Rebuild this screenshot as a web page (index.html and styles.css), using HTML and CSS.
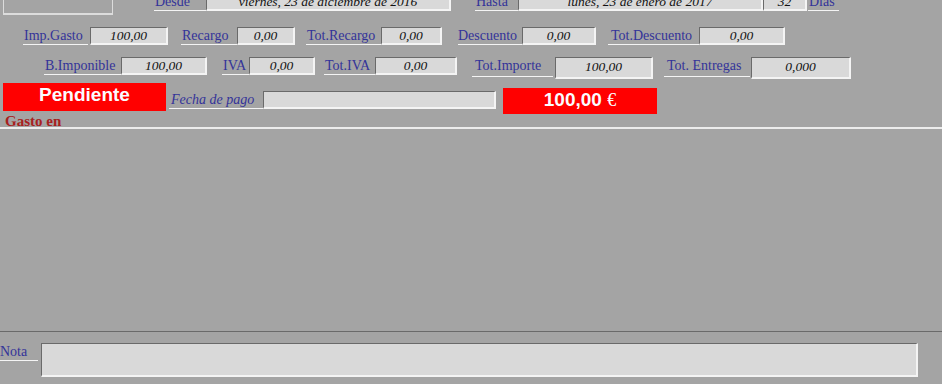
FILE: index.html
```html
<!doctype html>
<html lang="es">
  <head>
    <meta charset="UTF-8" />
    <meta name="viewport" content="width=device-width, initial-scale=1.0" />
    <title>Gasto</title>
    <link rel="stylesheet" href="styles.css">
  </head>
  <body>
    <div class="gasto-form">
      <div class="row row-fechas">
        <div class="top-box"></div>
        <div class="lbl lbl-desde">Desde</div>
        <div class="field field-fecha">viernes, 23 de diciembre de 2016</div>
        <div class="lbl lbl-hasta">Hasta</div>
        <div class="field field-fecha">lunes, 23 de enero de 2017</div>
        <div class="field field-dias">32</div>
        <div class="lbl lbl-dias">Días</div>
      </div>

      <div class="row row-importes">
        <div class="lbl lbl-imp">Imp.Gasto</div>
        <div class="field field-imp">100,00</div>
        <div class="lbl lbl-recargo">Recargo</div>
        <div class="field field-recargo">0,00</div>
        <div class="lbl lbl-totrecargo">Tot.Recargo</div>
        <div class="field field-totrecargo">0,00</div>
        <div class="lbl lbl-descuento">Descuento</div>
        <div class="field field-descuento">0,00</div>
        <div class="lbl lbl-totdescuento">Tot.Descuento</div>
        <div class="field field-totdescuento">0,00</div>
      </div>

      <div class="row row-totales">
        <div class="lbl lbl-base">B.Imponible</div>
        <div class="field field-base">100,00</div>
        <div class="lbl lbl-iva">IVA</div>
        <div class="field field-iva">0,00</div>
        <div class="lbl lbl-totiva">Tot.IVA</div>
        <div class="field field-totiva">0,00</div>
        <div class="lbl lbl-totimporte">Tot.Importe</div>
        <div class="field field-big field-totimporte">100,00</div>
        <div class="lbl lbl-entregas">Tot. Entregas</div>
        <div class="field field-big field-entregas">0,000</div>
      </div>

      <div class="row row-estado">
        <div class="estado">Pendiente</div>
        <div class="lbl lbl-pago">Fecha de pago</div>
        <div class="field field-pago"></div>
        <div class="total">100,00 <span class="euro">€</span></div>
      </div>

      <div class="gasto-en">Gasto en</div>
      <div class="detalle"></div>

      <div class="row row-nota">
        <div class="lbl lbl-nota">Nota</div>
        <div class="field field-nota"></div>
      </div>
    </div>
  </body>
</html>
```

FILE: styles.css
```css
:root {
  --bg-color: #a4a4a4;
  --field-color: #d9d9d9;
  --label-color: #333399;
  --shadow-color: #6a6a6a;
  --light-color: #f4f4f4;
  --red: #ff0000;
}

* {
  margin: 0;
  padding: 0;
  box-sizing: border-box;
}

body {
  font-family: 'Liberation Serif', 'DejaVu Serif', serif;
  background-color: var(--bg-color);
  color: #111;
  overflow: hidden;
}

.gasto-form {
  width: 942px;
  height: 384px;
}

.row {
  display: flex;
  align-items: flex-start;
}

/* labels and sunken fields */

.lbl {
  height: 18px;
  font-size: 14px;
  line-height: 17px;
  color: var(--label-color);
  border-bottom: 1px solid var(--light-color);
  padding-left: 1px;
  white-space: nowrap;
  overflow: hidden;
}

.field {
  height: 18px;
  background: var(--field-color);
  border-style: solid;
  border-width: 1px 2px 2px 1px;
  border-color: var(--shadow-color) var(--light-color) var(--light-color) var(--shadow-color);
  font-size: 13.5px;
  font-style: italic;
  line-height: 15px;
  text-align: center;
  white-space: nowrap;
  overflow: hidden;
}

/* fechas */

.row-fechas {
  height: 18px;
  margin-top: -7px;
}

.top-box {
  width: 110px;
  height: 22px;
  margin-left: 3px;
  border: 1px solid #dcdcdc;
  border-bottom-width: 2px;
  border-top: none;
}

.lbl-desde { width: 52px; margin-left: 41px; }
.field-fecha { width: 245px; }
.lbl-hasta { width: 43px; margin-left: 24px; }
.field-dias { width: 44px; }
.lbl-dias { width: 31px; margin-left: 1px; }

/* importes */

.row-importes {
  height: 18px;
  margin-top: 16px;
}

.lbl-imp { width: 65px; margin-left: 23px; }
.field-imp { width: 78px; margin-left: 2px; }
.lbl-recargo { width: 56px; margin-left: 13px; }
.field-recargo { width: 58px; }
.lbl-totrecargo { width: 75px; margin-left: 11px; }
.field-totrecargo { width: 61px; }
.lbl-descuento { width: 64px; margin-left: 16px; padding-left: 0; }
.field-descuento { width: 74px; }
.lbl-totdescuento { width: 91px; margin-left: 12px; padding-left: 3px; }
.field-totdescuento { width: 86px; }

/* totales */

.row-totales {
  height: 22px;
  margin-top: 12px;
}

.field-big {
  height: 22px;
  line-height: 18px;
}

.lbl-base { width: 77px; margin-left: 44px; }
.field-base { width: 86px; }
.lbl-iva { width: 27px; margin-left: 15px; }
.field-iva { width: 66px; }
.lbl-totiva { width: 51px; margin-left: 9px; }
.field-totiva { width: 82px; }
.lbl-totimporte { width: 81px; height: 20px; margin-left: 15px; padding-left: 3px; }
.field-totimporte { width: 98px; margin-left: 2px; }
.lbl-entregas { width: 86px; height: 20px; margin-left: 11px; padding-left: 3px; }
.field-entregas { width: 100px; margin-left: 1px; }

/* estado y total */

.row-estado {
  height: 31px;
  margin-top: 4px;
}

.estado,
.total {
  background: var(--red);
  color: #fbfbff;
  font-family: 'Liberation Sans', Arial, sans-serif;
  font-weight: bold;
  font-size: 19px;
  line-height: 24px;
  text-align: center;
}

.estado {
  width: 163px;
  height: 28px;
  margin-left: 3px;
}

.lbl-pago {
  width: 94px;
  margin-left: 3px;
  margin-top: 8px;
  font-style: italic;
  padding-left: 2px;
}

.field-pago {
  width: 233px;
  margin-top: 8px;
}

.total {
  width: 154px;
  height: 26px;
  margin-left: 7px;
  margin-top: 5px;
}

.euro {
  font-family: 'Liberation Serif', serif;
  font-weight: normal;
  font-size: 18px;
}

/* detalle */

.gasto-en {
  height: 13px;
  padding-left: 5px;
  font-size: 15px;
  font-weight: bold;
  line-height: 14px;
  color: #a82020;
}

.detalle {
  height: 205px;
  border-top: 2px solid #ececec;
  border-bottom: 1px solid var(--shadow-color);
}

/* nota */

.row-nota {
  margin-top: 11px;
}

.lbl-nota {
  width: 38px;
  padding-left: 0;
  font-size: 14px;
}

.field-nota {
  width: 877px;
  height: 34px;
  margin-left: 3px;
}
```
